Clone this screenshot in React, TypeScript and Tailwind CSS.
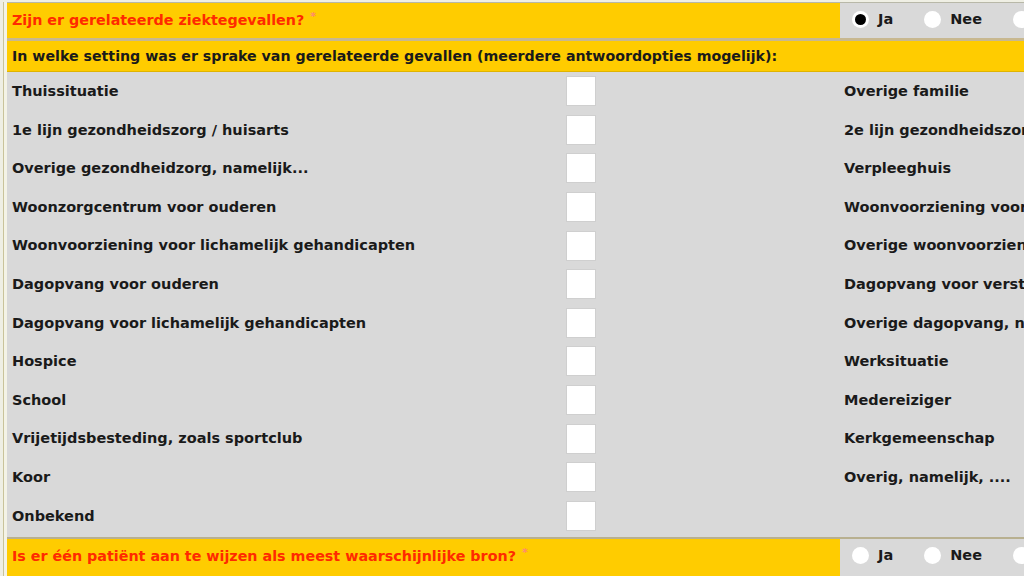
import React from 'react';

const leftItems = [
  'Thuissituatie',
  '1e lijn gezondheidszorg / huisarts',
  'Overige gezondheidzorg, namelijk...',
  'Woonzorgcentrum voor ouderen',
  'Woonvoorziening voor lichamelijk gehandicapten',
  'Dagopvang voor ouderen',
  'Dagopvang voor lichamelijk gehandicapten',
  'Hospice',
  'School',
  'Vrijetijdsbesteding, zoals sportclub',
  'Koor',
  'Onbekend',
];

const rightItems = [
  'Overige familie',
  '2e lijn gezondheidszorg',
  'Verpleeghuis',
  'Woonvoorziening voor verstandelijk gehandicapten',
  'Overige woonvoorziening',
  'Dagopvang voor verstandelijk gehandicapten',
  'Overige dagopvang, namelijk',
  'Werksituatie',
  'Medereiziger',
  'Kerkgemeenschap',
  'Overig, namelijk, ....',
  '',
];

function Radio({ label, checked }: { label: string; checked?: boolean }) {
  return (
    <label className="flex items-center gap-[9px]">
      <span className="w-[17px] h-[17px] rounded-full bg-white flex items-center justify-center">
        {checked && <span className="w-[11px] h-[11px] rounded-full bg-black" />}
      </span>
      <span className="font-bold text-[#1a1a1a]">{label}</span>
    </label>
  );
}

function QuestionRow({ text, selected }: { text: string; selected?: boolean }) {
  return (
    <div className="flex h-[35px] shrink-0">
      <div className="w-[833px] bg-[#ffcc00] flex items-start pt-[10px] pl-[5px] text-[#ff2a00] font-bold text-[14.3px]">
        {text} <span className="ml-[6px] text-[#ff8a70] text-[11px] -mt-[2px]">*</span>
      </div>
      <div className="flex-1 bg-[#d9d9d9] flex items-start pt-[8px] gap-[31px] pl-[12px]">
        <Radio label="Ja" checked={selected} />
        <Radio label="Nee" />
        <Radio label="Onbekend" />
      </div>
    </div>
  );
}

function Checkbox() {
  return <span className="w-[30px] h-[30px] bg-white border border-[#cfcfcf] block" />;
}

export default function App() {
  return (
    <div
      className="w-[1024px] h-[576px] overflow-hidden bg-[#efefe4] text-[14.5px] leading-none"
      style={{ fontFamily: '"DejaVu Sans", Verdana, sans-serif' }}
    >
      <div className="ml-[3px] border-l border-[#c9c39a] pl-[3px] bg-[#f4f3e6] w-[1400px] h-full">
        <div className="border-t border-[#b8b8a8] mt-[2px] flex flex-col h-[574px]">
          <QuestionRow text="Zijn er gerelateerde ziektegevallen?" selected />
          <div className="h-[3px] bg-[#c8b890]" />
          <div className="h-[30px] bg-[#ffcc00] flex items-center pl-[5px] font-bold text-[#1a1a1a] text-[14.2px]">
            In welke setting was er sprake van gerelateerde gevallen (meerdere antwoordopties mogelijk):
          </div>
          <div className="h-[1px] bg-[#e0b400]" />
          <div className="bg-[#d9d9d9] pb-[2px]">
            {leftItems.map((item, i) => (
              <div key={i} className="flex items-center h-[38.6px]">
                <div className="w-[559px] pl-[5px] font-bold text-[#1a1a1a]">{item}</div>
                <Checkbox />
                <div className="w-[248px]" />
                <div className="font-bold text-[#1a1a1a] whitespace-nowrap">{rightItems[i]}</div>
              </div>
            ))}
          </div>
          <div className="h-[2px] bg-[#b8b090]" />
          <div className="flex-1 flex flex-col">
            <QuestionRow text="Is er één patiënt aan te wijzen als meest waarschijnlijke bron?" />
            <div className="flex flex-1">
              <div className="w-[833px] bg-[#ffcc00]" />
              <div className="flex-1 bg-[#d9d9d9]" />
            </div>
          </div>
        </div>
      </div>
    </div>
  );
}
